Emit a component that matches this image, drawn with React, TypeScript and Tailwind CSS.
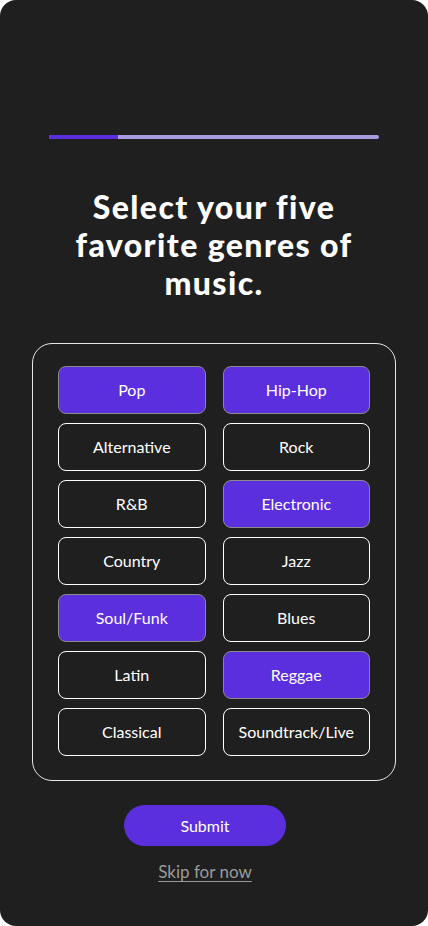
const genres = [
  { name: "Pop", on: true },
  { name: "Hip-Hop", on: true },
  { name: "Alternative", on: false },
  { name: "Rock", on: false },
  { name: "R&B", on: false },
  { name: "Electronic", on: true },
  { name: "Country", on: false },
  { name: "Jazz", on: false },
  { name: "Soul/Funk", on: true },
  { name: "Blues", on: false },
  { name: "Latin", on: false },
  { name: "Reggae", on: true },
  { name: "Classical", on: false },
  { name: "Soundtrack/Live", on: false },
];

export default function App() {
  return (
    <div className="min-h-[926px] w-[428px] bg-white font-['Lato',sans-serif]">
      <div className="flex h-[926px] flex-col items-center rounded-[16px] bg-[#1f1f1f]">
        {/* progress */}
        <div className="mt-[135px] flex h-[4px] w-[330px] overflow-hidden rounded-full bg-[#a99bdf]">
          <div className="h-full w-[69px] bg-[#5b2ede]" />
        </div>

        <h1 className="mt-[49px] w-[340px] text-center text-[32px] font-black leading-[38px] tracking-[1.4px] text-white">
          Select your five favorite genres of music.
        </h1>

        <div className="mt-[41px] w-[364px] rounded-[20px] border border-[#e6e6e6] px-[25px] pt-[22px] pb-[24px]">
          <div className="grid grid-cols-2 gap-x-[17px] gap-y-[9px]">
            {genres.map((g) => (
              <button
                key={g.name}
                className={
                  g.on
                    ? "flex h-[48px] items-center justify-center rounded-[8px] border border-[#8a8a8a] bg-[#5b2ede] text-[16px] text-white"
                    : "flex h-[48px] items-center justify-center rounded-[8px] border border-white bg-transparent text-[16px] text-white"
                }
              >
                {g.name}
              </button>
            ))}
          </div>
        </div>

        <div className="flex w-full flex-col items-center pr-[18px]">
          <button className="mt-[24px] h-[41px] w-[162px] rounded-full bg-[#5b2ede] text-[16px] text-white">
            Submit
          </button>
          <a className="mt-[13px] text-[17px] text-[#9b9b9b] underline underline-offset-[3px]">
            Skip for now
          </a>
        </div>
      </div>
    </div>
  );
}
